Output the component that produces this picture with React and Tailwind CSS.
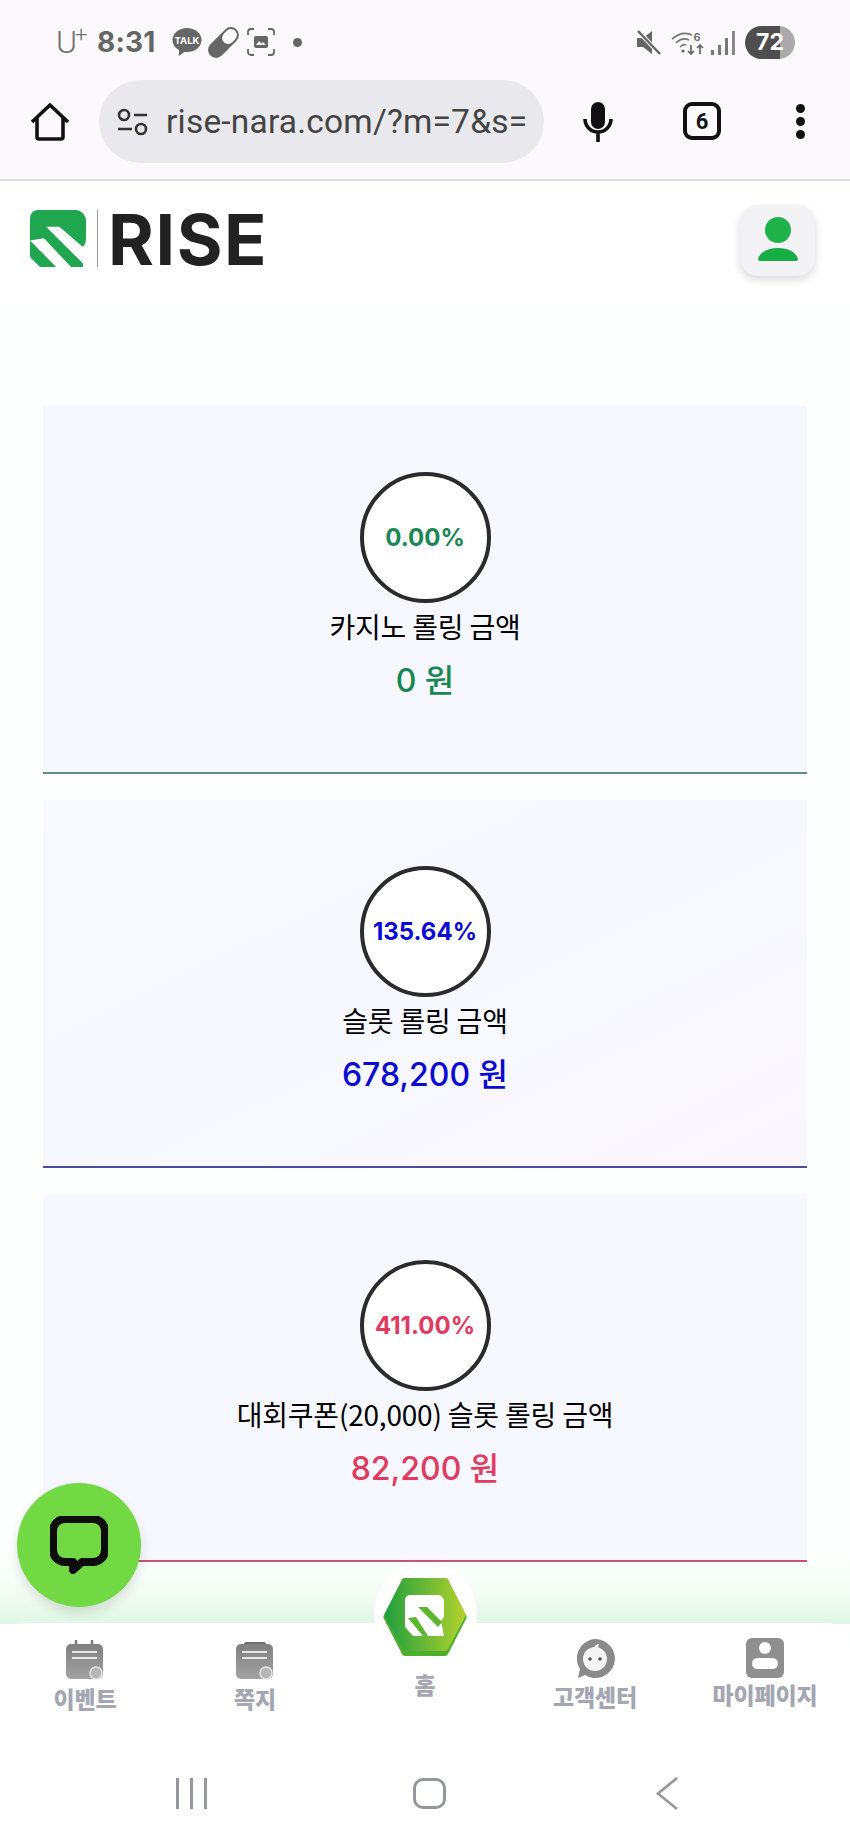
import React from 'react';

const cards = [
  { pct: '0.00%', label: '카지노 롤링 금액', amount: '0 원', text: 'text-[#198754]', line: 'border-[#5d9278]', bg: 'bg-[#f7f8ff]' },
  { pct: '135.64%', label: '슬롯 롤링 금액', amount: '678,200 원', text: 'text-[#0a0ad0]', line: 'border-[#4c4c9c]', bg: 'bg-gradient-to-br from-[#f7f9ff] via-[#f7f8ff] to-[#faf6fe]' },
  { pct: '411.00%', label: '대회쿠폰(20,000) 슬롯 롤링 금액', amount: '82,200 원', text: 'text-[#e03a5f]', line: 'border-[#c2506c]', bg: 'bg-[#f7f8ff]' },
];

const KR = 'font-["Noto_Sans_CJK_KR",sans-serif]';

function StatusBar() {
  return (
    <div className="flex h-[62px] items-end justify-between pl-[56px] pr-[55px] pb-[3px] text-[#666]">
      <div className="-mb-[3px] flex items-center">
        <span className='relative font-["Roboto",sans-serif] text-[32px] font-light leading-[40px] w-[41px] text-[#707070]'>
          U<span className="absolute left-[19px] top-[-7px] text-[22px]">+</span>
        </span>
        <span className='font-["Inter",sans-serif] text-[28px] font-bold leading-[40px] tracking-[0.2px] w-[75px] text-[#666]'>8:31</span>
        <svg width="30" height="30" viewBox="0 0 30 30" className="mr-[7px]">
          <ellipse cx="15" cy="13" rx="14.5" ry="12" fill="#666" />
          <path d="M7 21l0 8 8-6z" fill="#666" />
          <text x="15" y="17" textAnchor="middle" fontSize="9.5" fontWeight="700" fontFamily="Inter, sans-serif" fill="#fff">TALK</text>
        </svg>
        <svg width="29" height="29" viewBox="0 0 29 29" className="mr-[9px] overflow-visible">
          <g transform="rotate(-45 14.5 14.5)">
            <rect x="-4" y="6.500" width="37" height="16" rx="8" fill="#666" />
            <rect x="15" y="8.500" width="16" height="12" rx="6" fill="#fbf9fc" />
          </g>
        </svg>
        <svg width="28" height="28" viewBox="0 0 28 28" fill="none" className="mr-[18px]">
          <path d="M1 7V4a3 3 0 0 1 3-3h3M21 1h3a3 3 0 0 1 3 3v3M27 21v3a3 3 0 0 1-3 3h-3M7 27H4a3 3 0 0 1-3-3v-3" stroke="#666" strokeWidth="1.8" />
          <rect x="7" y="8" width="14" height="12" rx="2" fill="#666" />
          <path d="M9 17l3-4 2.5 2.5L16 14l3 3z" fill="#fff" />
        </svg>
        <span className="h-[9px] w-[9px] rounded-full bg-[#666]" />
      </div>
      <div className="flex items-center">
        <svg width="25" height="25" viewBox="0 0 25 25" className="mr-[10px]">
          <path d="M1 8h6l9-7v23l-9-7H1z" fill="#666" />
          <path d="M2 1l22 23" stroke="#fbf9fc" strokeWidth="4.5" />
          <path d="M2 1l22 23" stroke="#666" strokeWidth="2.5" />
        </svg>
        <svg width="34" height="26" viewBox="0 0 34 26" fill="none" className="mr-[6px]">
          <path d="M1 9c7-6 14-7 20-4M5 13c4-4 9-5 13-3M9 17c2-2 4-3 6-2" stroke="#777" strokeWidth="1.7" />
          <circle cx="12" cy="21" r="1.6" fill="#666" />
          <path d="M20 15v9m-3-3l3 3 3-3M29 24v-9m-3 3l3-3 3 3" stroke="#666" strokeWidth="1.7" />
          <text x="26" y="11" textAnchor="middle" fontSize="11" fontWeight="600" fontFamily="Inter, sans-serif" fill="#666">6</text>
        </svg>
        <svg width="24" height="24" viewBox="0 0 24 24" className="mr-[10px]">
          <rect x="0" y="19" width="3" height="5" fill="#777" />
          <rect x="7" y="14" width="3" height="10" fill="#777" />
          <rect x="14" y="7" width="3" height="17" fill="#777" />
          <rect x="21" y="0" width="3" height="24" fill="#888" />
        </svg>
        <span className='flex h-[33px] w-[50px] items-center justify-center rounded-full bg-gradient-to-r from-[#4f4d50] from-[70%] to-[#aaa9ab] to-[70%] font-["Inter",sans-serif] text-[23px] font-bold text-white'>72</span>
      </div>
    </div>
  );
}

function BrowserBar() {
  return (
    <div className="flex h-[119px] items-start border-b-2 border-[#dedee0] pt-[18px]">
      <svg width="40" height="40" viewBox="0 0 40 40" fill="none" className="ml-[30px] mt-[22px]">
        <path d="M2 20L20 3l18 17M7 16v19a2 2 0 0 0 2 2h22a2 2 0 0 0 2-2V16" stroke="#111" strokeWidth="3.6" strokeLinejoin="round" />
      </svg>
      <div className="ml-[29px] flex h-[83px] w-[445px] items-center rounded-full bg-[#e9e8ec] pl-[18px]">
        <svg width="31" height="28" viewBox="0 0 31 28" fill="none">
          <circle cx="7" cy="7" r="5" stroke="#333" strokeWidth="2.6" />
          <path d="M17 7h13M1 21h14" stroke="#333" strokeWidth="2.6" />
          <circle cx="24" cy="21" r="5" stroke="#333" strokeWidth="2.6" />
        </svg>
        <span className='ml-[18px] font-["Roboto",sans-serif] text-[33.5px] leading-none tracking-[0.2px] text-[#444]'>rise-nara.com/?m=7&amp;s=</span>
      </div>
      <svg width="30" height="40" viewBox="0 0 30 40" fill="none" className="ml-[39px] mt-[22px]">
        <rect x="8" y="0" width="14" height="27" rx="7" fill="#111" />
        <path d="M2 17a13 13 0 0 0 26 0M15 30v10" stroke="#111" strokeWidth="3.6" />
      </svg>
      <span className='ml-[70px] mt-[22px] flex h-[38px] w-[38px] items-center justify-center rounded-[9px] border-4 border-[#111] font-["Roboto",sans-serif] text-[22px] font-bold text-[#111]'>6</span>
      <div className="ml-[75px] mt-[24px] flex flex-col gap-[4px]">
        <span className="h-[9px] w-[9px] rounded-full bg-[#111]" />
        <span className="h-[9px] w-[9px] rounded-full bg-[#111]" />
        <span className="h-[9px] w-[9px] rounded-full bg-[#111]" />
      </div>
    </div>
  );
}

function RMark() {
  return (
    <svg width="57" height="58" viewBox="0 0 57 58">
      <path d="M8 0H45a11 11 0 0 1 11 11V28c0 4-1 7-3 9V57H10L3 50a6 6 0 0 1-3-6V8a8 8 0 0 1 8-8z" fill="#1fa64f" />
      <path d="M16 16.700H29.300L52.700 36.700H60V58H57.500z" fill="#fff" />
      <path d="M0 30.500L14 28.300 42 58H27z" fill="#fff" />
    </svg>
  );
}

function Header() {
  return (
    <div className="flex h-[124px] items-start justify-between bg-white pl-[30px] pr-[35px]">
      <div className="mt-[28px] flex items-center">
        <RMark />
        <span className="ml-[10px] h-[57px] w-px bg-[#999]" />
        <span className='ml-[10px] mt-[2px] font-["Inter",sans-serif] text-[70px] font-bold leading-[57px] tracking-[1.5px] text-[#222]'>RISE</span>
      </div>
      <button className="mt-[24px] flex h-[71px] w-[75px] items-center justify-center rounded-[18px] bg-[#f3f3f6] shadow-[0_4px_8px_rgba(0,0,0,0.14)]">
        <svg width="40" height="44" viewBox="0 0 40 44" className="mb-[3px]">
          <circle cx="20" cy="13" r="13" fill="#22b24c" />
          <path d="M0 42c2-7 10-11 20-11s18 4 20 11c0 1-1 2-2 2H2c-1 0-2-1-2-2z" fill="#17ad45" />
        </svg>
      </button>
    </div>
  );
}

function RollingCard({ pct, label, amount, text, line, bg }) {
  return (
    <div className={`flex h-[368px] flex-col items-center border-b-2 pt-[66px] ${line} ${bg}`}>
      <div className="flex h-[131px] w-[131px] items-center justify-center whitespace-nowrap rounded-full border-[4px] border-[#2b2b2b] bg-white">
        <span className={`font-["Inter",sans-serif] text-[24px] font-bold ${text}`}>{pct}</span>
      </div>
      <div className={`${KR} mt-[4px] text-[28px] leading-[38px] tracking-[-0.2px] text-black`}>{label}</div>
      <div className={`font-["Inter","Noto_Sans_CJK_KR",sans-serif] mt-[16px] text-[32px] font-medium leading-[40px] ${text}`}>{amount}</div>
    </div>
  );
}

function NavIcon({ kind }) {
  if (kind === 'event' || kind === 'note') {
    return (
      <svg width="38" height="44" viewBox="0 0 38 44">
        <defs>
          <linearGradient id={`g-${kind}`} x1="0" y1="0" x2="0" y2="1">
            <stop offset="0" stopColor="#808080" />
            <stop offset="1" stopColor="#a2a2a2" />
          </linearGradient>
        </defs>
        {kind === 'event' ? (
          <path d="M10 2v8M26 2v8" stroke="#7a7a7a" strokeWidth="2.5" />
        ) : (
          <rect x="8" y="4" width="22" height="6" rx="2" fill="#6f6f6f" />
        )}
        <rect x="0" y="6" width="37" height="35" rx="5" fill={`url(#g-${kind})`} />
        <path d="M6 14h25M6 20h25" stroke="#e8e8e8" strokeWidth="2.2" />
        <circle cx="30" cy="35" r="6" fill="#b5b5b5" stroke="#e4e4e4" strokeWidth="1.5" />
      </svg>
    );
  }
  if (kind === 'support') {
    return (
      <svg width="40" height="42" viewBox="0 0 40 42">
        <path d="M20 1a19.500 19.500 0 1 1-10 36l-7 3 2-9A19.500 19.500 0 0 1 20 1z" fill="#8a8a8a" />
        <circle cx="20" cy="21" r="12" fill="#f4f4f4" />
        <path d="M19 10c1-3 3-4 5-4-1 2-1 3 0 5z" fill="#f4f4f4" />
        <circle cx="15" cy="21" r="1.800" fill="#555" />
        <circle cx="25" cy="21" r="1.800" fill="#555" />
      </svg>
    );
  }
  return (
    <svg width="38" height="40" viewBox="0 0 38 40">
      <rect x="0" y="0" width="38" height="40" rx="6" fill="#8f8f8f" />
      <circle cx="19" cy="10" r="6" fill="#fff" />
      <rect x="6" y="20" width="26" height="11" rx="5.500" fill="#fff" />
    </svg>
  );
}

function HomeHex() {
  return (
    <div className="-mt-[76px] flex h-[103px] w-[103px] items-center justify-center rounded-full bg-white pt-[7px]">
      <svg width="84" height="80" viewBox="0 0 84 80">
        <defs>
          <linearGradient id="hex" x1="0" y1="0" x2="1" y2="0">
            <stop offset="0" stopColor="#1f9f3f" />
            <stop offset="1" stopColor="#b3d22c" />
          </linearGradient>
        </defs>
        <path d="M22 1h40a4 4 0 0 1 3 2l18 35a4 4 0 0 1 0 4L65 77a4 4 0 0 1-3 2H22a4 4 0 0 1-3-2L1 42a4 4 0 0 1 0-4L19 3a4 4 0 0 1 3-2z" fill="#4fae2c" />
        <path d="M22 1h40a4 4 0 0 1 3 2l17 33a4 4 0 0 1 0 4L65 72a4 4 0 0 1-3 2H22a4 4 0 0 1-3-2L2 40a4 4 0 0 1 0-4L19 3a4 4 0 0 1 3-2z" fill="url(#hex)" />
        <path d="M27 18H55a6 6 0 0 1 6 6V38c0 3-2 5-3 6L61 59H30L22 50V23a5 5 0 0 1 5-5z" fill="#fff" />
        <path d="M35 30h9l15 15-4 5zM25 41l8-1 12 19h-5z" fill="#5bb52f" />
      </svg>
    </div>
  );
}

function BottomNav() {
  const tabs = [
    { kind: 'event', label: '이벤트' },
    { kind: 'note', label: '쪽지' },
    { kind: 'home', label: '홈' },
    { kind: 'support', label: '고객센터' },
    { kind: 'my', label: '마이페이지' },
  ];
  return (
    <div className="absolute inset-x-0 bottom-0">
      <div className="h-[64px] bg-gradient-to-b from-transparent via-[#f3fcf4] via-[55%] to-[#dff7e4]" />
      <div className="h-[219px] rounded-t-[24px] bg-white -mt-px">
        <div className="grid h-[127px] grid-cols-5 pt-[15px]">
          {tabs.map((tab) => (
            <div key={tab.kind} className="flex flex-col items-center">
              {tab.kind === 'home' ? <HomeHex /> : <NavIcon kind={tab.kind} />}
              <span className={`${KR} ${tab.kind === 'home' ? 'mt-[6px]' : 'mt-[3px]'} text-[23px] font-black leading-[26px] tracking-[-0.2px] text-[#a4a6b3]`}>{tab.label}</span>
            </div>
          ))}
        </div>
        <div className="mt-[27px] grid grid-cols-3 items-center pl-[72px] pr-[64px]">
          <div className="flex justify-center gap-[11px]">
            <span className="h-[31px] w-[3px] bg-[#96979c]" />
            <span className="h-[31px] w-[3px] bg-[#96979c]" />
            <span className="h-[31px] w-[3px] bg-[#96979c]" />
          </div>
          <div className="flex justify-center">
            <span className="h-[31px] w-[33px] rounded-[10px] border-[3px] border-[#96979c]" />
          </div>
          <div className="flex justify-center">
            <svg width="22" height="33" viewBox="0 0 22 33" fill="none">
              <path d="M21 1L2 16.500 21 32" stroke="#96979c" strokeWidth="2.6" />
            </svg>
          </div>
        </div>
      </div>
    </div>
  );
}

export default function App() {
  return (
    <div className="relative h-[1842px] w-[850px] overflow-hidden bg-[#fcfffd]">
      <div className="bg-[#fbf9fc]">
        <StatusBar />
        <BrowserBar />
      </div>
      <Header />

      <div className="mt-[101px] flex flex-col gap-[26px] px-[43px]">
        {cards.map((card) => (
          <RollingCard key={card.label} {...card} />
        ))}
      </div>

      <BottomNav />

      {/* Chat button */}
      <button className="absolute bottom-[235px] left-[17px] flex h-[124px] w-[124px] items-center justify-center rounded-full bg-[#72d944] shadow-[0_6px_12px_rgba(0,0,0,0.12)]">
        <svg width="58" height="58" viewBox="0 0 58 58" fill="none">
          <path d="M15 3h28a12 12 0 0 1 12 12v19a12 12 0 0 1-12 12H32l-9 8v-8h-8A12 12 0 0 1 3 34V15A12 12 0 0 1 15 3z" stroke="#0d0d0d" strokeWidth="8" strokeLinejoin="round" />
        </svg>
      </button>
    </div>
  );
}
